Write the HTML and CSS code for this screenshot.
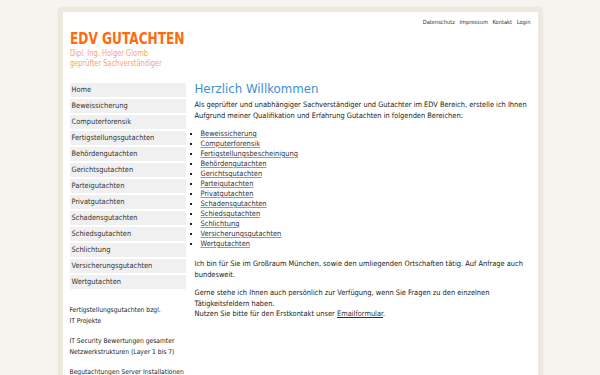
FILE: index.html
```html
<!DOCTYPE html>
<html lang="de">
<head>
    <meta charset="UTF-8">
    <meta name="viewport" content="width=device-width, initial-scale=1.0">
    <title>EDV Gutachten</title>
    <link rel="stylesheet" href="styles.css">
</head>
<body>

    <div class="page">
        <div class="topnav">
            <a href="#">Datenschutz</a>
            <a href="#">Impressum</a>
            <a href="#">Kontakt</a>
            <a href="#">Login</a>
        </div>

        <div class="logo">
            <div class="logo-title">EDV GUTACHTEN</div>
            <div class="logo-sub">Dipl. Ing. Holger Glomb<br>geprüfter Sachverständiger</div>
        </div>

        <div class="columns">
            <div class="sidebar">
                <ul class="menu">
                    <li><a href="#">Home</a></li>
                    <li><a href="#">Beweissicherung</a></li>
                    <li><a href="#">Computerforensik</a></li>
                    <li><a href="#">Fertigstellungsgutachten</a></li>
                    <li><a href="#">Behördengutachten</a></li>
                    <li><a href="#">Gerichtsgutachten</a></li>
                    <li><a href="#">Parteigutachten</a></li>
                    <li><a href="#">Privatgutachten</a></li>
                    <li><a href="#">Schadensgutachten</a></li>
                    <li><a href="#">Schiedsgutachten</a></li>
                    <li><a href="#">Schlichtung</a></li>
                    <li><a href="#">Versicherungsgutachten</a></li>
                    <li><a href="#">Wertgutachten</a></li>
                </ul>

                <div class="side-text">
                    <p>Fertigstellungsgutachten bzgl.<br>IT Projekte</p>
                    <p>IT Security Bewertungen gesamter<br>Netzwerkstrukturen (Layer 1 bis 7)</p>
                    <p>Begutachtungen Server Installationen</p>
                </div>
            </div>

            <div class="content">
                <h1>Herzlich Willkommen</h1>
                <p>Als geprüfter und unabhängiger Sachverständiger und Gutachter im EDV Bereich, erstelle ich Ihnen Aufgrund meiner Qualifikation und Erfahrung Gutachten in folgenden Bereichen:</p>

                <ul class="areas">
                    <li><a href="#">Beweissicherung</a></li>
                    <li><a href="#">Computerforensik</a></li>
                    <li><a href="#">Fertigstellungsbescheinigung</a></li>
                    <li><a href="#">Behördengutachten</a></li>
                    <li><a href="#">Gerichtsgutachten</a></li>
                    <li><a href="#">Parteigutachten</a></li>
                    <li><a href="#">Privatgutachten</a></li>
                    <li><a href="#">Schadensgutachten</a></li>
                    <li><a href="#">Schiedsgutachten</a></li>
                    <li><a href="#">Schlichtung</a></li>
                    <li><a href="#">Versicherungsgutachten</a></li>
                    <li><a href="#">Wertgutachten</a></li>
                </ul>

                <p>Ich bin für Sie im Großraum München, sowie den umliegenden Ortschaften tätig. Auf Anfrage auch bundesweit.</p>

                <p>Gerne stehe ich Ihnen auch persönlich zur Verfügung, wenn Sie Fragen zu den einzelnen Tätigkeitsfeldern haben.<br>
                Nutzen Sie bitte für den Erstkontakt unser <a href="#">Emailformular</a>.</p>
            </div>
        </div>
    </div>

</body>
</html>
```

FILE: styles.css
```css
body {
    font-family: "DejaVu Sans Condensed", "DejaVu Sans", Verdana, sans-serif;
    font-size: 7.4px;
    color: #222222;
    background-color: #f5f4ef;
    margin: 0;
    padding: 7px 0 0 0;
}
a {
    color: #333333;
}
.page {
    width: 461px;
    min-height: 420px;
    margin: 0 auto;
    background-color: #ffffff;
    border: 5px solid #ece9e1;
    border-bottom: none;
    border-radius: 4px 4px 0 0;
    padding: 0 7px;
    box-sizing: content-box;
    box-shadow: 0 0 3px rgba(0, 0, 0, 0.04);
}
.topnav {
    text-align: right;
    padding-top: 7px;
    height: 12px;
    font-size: 5.7px;
}
.topnav a {
    text-decoration: none;
    margin-left: 3px;
}
.logo {
    height: 52px;
}
.logo-title,
.logo-sub {
    font-family: "DejaVu Sans Condensed", "DejaVu Sans", sans-serif;
    transform-origin: left top;
}
.logo-title {
    font-weight: bold;
    font-size: 16.5px;
    line-height: 16px;
    color: #ff6a0d;
    transform: scaleX(0.82);
}
.logo-sub {
    font-size: 9.5px;
    line-height: 10px;
    color: #f8a56a;
    margin-top: 1px;
    transform: scaleX(0.78);
}
.columns {
    display: flex;
    gap: 9px;
}
.sidebar {
    width: 116px;
    flex-shrink: 0;
}
.menu {
    list-style: none;
    margin: 0;
    padding: 0;
}
.menu li {
    margin-bottom: 2px;
}
.menu a {
    display: block;
    background-color: #f0f0f0;
    padding: 0 2px;
    height: 14px;
    line-height: 14px;
    text-decoration: none;
    color: #333333;
}
.side-text {
    margin-top: 16px;
    font-size: 6.7px;
    line-height: 11px;
    white-space: nowrap;
}
.side-text p {
    margin: 0 0 9px 0;
}
.content {
    flex: 1;
}
.content h1 {
    font-family: "DejaVu Sans", sans-serif;
    font-weight: normal;
    font-size: 11.8px;
    color: #3d8fd6;
    margin: 0 0 5px 0;
    line-height: 12px;
}
.content p {
    line-height: 10.5px;
    margin: 0 0 8px 0;
}
.areas {
    list-style: square;
    margin: 0 0 10px 0;
    padding-left: 6px;
    line-height: 10px;
}
.areas a {
    text-decoration-color: #999999;
}
```
